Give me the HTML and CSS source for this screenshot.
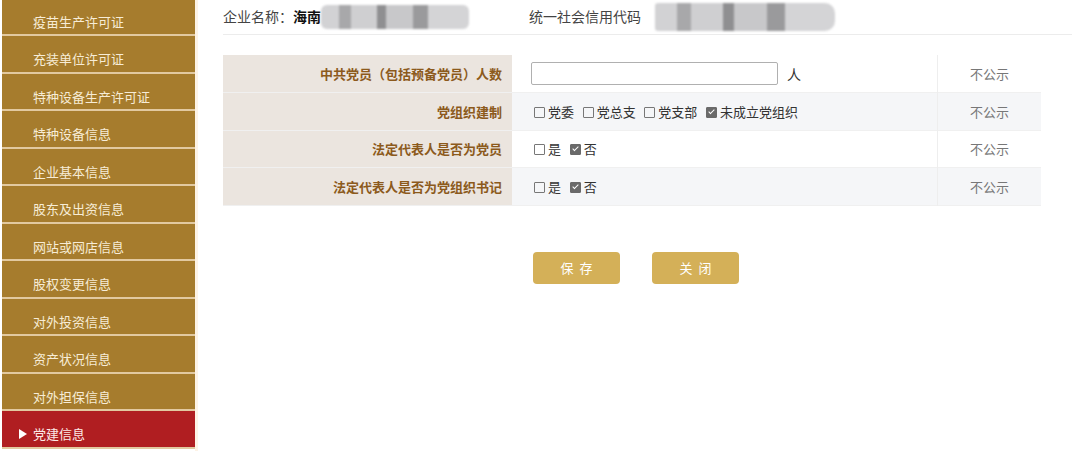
FILE: index.html
```html
<!DOCTYPE html>
<html lang="zh-CN">
<head>
  <meta charset="UTF-8" />
  <meta name="viewport" content="width=device-width, initial-scale=1" />
  <title>党建信息</title>
  <link rel="stylesheet" href="styles.css">
</head>
<body>
  <ul class="sidebar">
    <li>疫苗生产许可证</li>
    <li>充装单位许可证</li>
    <li>特种设备生产许可证</li>
    <li>特种设备信息</li>
    <li>企业基本信息</li>
    <li>股东及出资信息</li>
    <li>网站或网店信息</li>
    <li>股权变更信息</li>
    <li>对外投资信息</li>
    <li>资产状况信息</li>
    <li>对外担保信息</li>
    <li class="active">党建信息</li>
  </ul>

  <div class="main">
    <div class="header">
      <span class="field">企业名称：<b>海南</b><span class="mask mask-name"></span></span>
      <span class="field">统一社会信用代码<span class="mask mask-code"></span></span>
    </div>

    <table class="info-table">
      <tr>
        <th>中共党员（包括预备党员）人数</th>
        <td><input type="text" class="count-input"><span class="unit">人</span></td>
        <td class="pub">不公示</td>
      </tr>
      <tr>
        <th>党组织建制</th>
        <td>
          <span class="chk"></span>党委
          <span class="chk"></span>党总支
          <span class="chk"></span>党支部
          <span class="chk checked"></span>未成立党组织
        </td>
        <td class="pub">不公示</td>
      </tr>
      <tr>
        <th>法定代表人是否为党员</th>
        <td><span class="chk"></span>是 <span class="chk checked"></span>否</td>
        <td class="pub">不公示</td>
      </tr>
      <tr>
        <th>法定代表人是否为党组织书记</th>
        <td><span class="chk"></span>是 <span class="chk checked"></span>否</td>
        <td class="pub">不公示</td>
      </tr>
    </table>

    <div class="actions">
      <button>保存</button>
      <button>关闭</button>
    </div>
  </div>
</body>
</html>
```

FILE: styles.css
```css
body {
  margin: 0;
  font-family: "Liberation Sans", "Noto Sans CJK SC", sans-serif;
  font-size: 13px;
  color: #333;
  background: #fff;
  display: flex;
  height: 451px;
  overflow: hidden;
}
.sidebar {
  list-style: none;
  margin: -1.5px 0 0 2px;
  padding: 0;
  width: 193px;
  flex-shrink: 0;
}
.sidebar li {
  height: 24.5px;
  padding-top: 11px;
  line-height: 26px;
  padding-left: 31px;
  background-color: #a67c2d;
  color: #f7ecd6;
  border-bottom: 2px solid #e2c9a0;
  position: relative;
}
.sidebar li.active {
  background-color: #b01e21;
  color: #fde8e6;
}
.sidebar li.active::before {
  content: "";
  position: absolute;
  left: 17px;
  top: 18px;
  border-left: 8px solid #fff;
  border-top: 5px solid transparent;
  border-bottom: 5px solid transparent;
}
.main {
  flex: 1;
  padding: 0 8px 0 25px;
  border-left: 3px solid #fdf3e6;
}
.header {
  height: 34px;
  line-height: 36px;
  border-bottom: 1px solid #ececec;
  font-size: 14px;
  color: #444;
  display: flex;
  gap: 52px;
}
.header b {
  color: #111;
}
.field {
  display: flex;
  align-items: center;
}
.mask {
  display: inline-block;
  height: 24px;
  border-radius: 6px;
  filter: blur(1px);
  background:
    linear-gradient(90deg, #d2d2d4 0 12%, #a8a8aa 12% 20%, #cfcfd1 20% 38%, #8f8f91 38% 44%, #c8c8ca 44% 62%, #9a9a9c 62% 72%, #d4d4d6 72% 100%);
}
.mask-name {
  width: 148px;
  margin-right: 8px;
}
.mask-code {
  width: 180px;
  height: 28px;
  margin-left: 14px;
  border-radius: 3px 10px 10px 3px;
}
.info-table {
  margin-top: 20px;
  width: 818px;
  border-collapse: collapse;
}
.info-table tr {
  height: 37.5px;
  border-bottom: 1px solid #f0f0f0;
}
.info-table th {
  width: 278px;
  padding-right: 10px;
  text-align: right;
  background-color: #ebe5df;
  color: #8c5a1c;
  font-weight: bold;
}
.info-table td {
  padding: 0 0 0 19px;
  color: #333;
}
.info-table tr:nth-child(even) td {
  background-color: #f5f6f8;
}
.info-table td.pub {
  width: 103px;
  padding: 0;
  text-align: center;
  color: #777;
  border-left: 1px solid #eeeeee;
}
.count-input {
  box-sizing: border-box;
  width: 247px;
  height: 23px;
  padding: 0 2px;
  border: 1px solid #b0b0b0;
  border-radius: 2px;
  vertical-align: middle;
}
.unit {
  margin-left: 9px;
  font-size: 14px;
  vertical-align: middle;
}
.chk {
  display: inline-block;
  width: 9px;
  height: 9px;
  margin: 0 3px 0 5px;
  border: 1px solid #777;
  border-radius: 1px;
  vertical-align: -1px;
  position: relative;
}
.info-table td .chk:first-child {
  margin-left: 3px;
}
.chk.checked {
  background-color: #6a6a6a;
  border-color: #6a6a6a;
}
.chk.checked::after {
  content: "";
  position: absolute;
  left: 3px;
  top: 0px;
  width: 2px;
  height: 5px;
  border: solid #fff;
  border-width: 0 1.5px 1.5px 0;
  transform: rotate(45deg);
}
.actions {
  margin-top: 46px;
  padding-left: 310px;
  display: flex;
  gap: 32px;
}
.actions button {
  width: 87px;
  height: 32px;
  border: none;
  border-radius: 4px;
  background-color: #d4b058;
  color: #fff;
  font-family: "Liberation Sans", "Noto Sans CJK SC", sans-serif;
  font-size: 13px;
  letter-spacing: 6px;
  text-indent: 6px;
  cursor: pointer;
}
```
